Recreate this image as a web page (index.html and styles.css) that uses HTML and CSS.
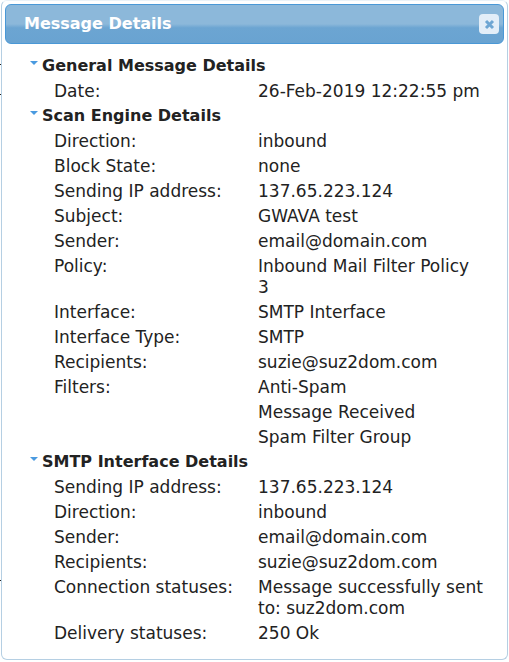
FILE: index.html
```html
<!DOCTYPE html>
<html lang="en">
<head>
<meta charset="utf-8">
<title>Message Details</title>
<link rel="stylesheet" href="styles.css">
</head>
<body>
<div class="dialog">
  <header class="titlebar">
    <span class="title">Message Details</span>
    <button class="close" aria-label="Close">
      <svg width="11" height="11" viewBox="0 0 11 11"><path d="M2 2l7 7M9 2l-7 7" stroke="#6ea6d3" stroke-width="3" fill="none"/></svg>
    </button>
  </header>
  <div class="content">
    <section>
      <h2 class="heading"><span class="arrow"></span>General Message Details</h2>
      <div class="rows">
        <div class="k">Date:</div><div class="v">26-Feb-2019 12:22:55 pm</div>
      </div>
    </section>
    <section>
      <h2 class="heading"><span class="arrow"></span>Scan Engine Details</h2>
      <div class="rows">
        <div class="k">Direction:</div><div class="v">inbound</div>
        <div class="k">Block State:</div><div class="v">none</div>
        <div class="k">Sending IP address:</div><div class="v">137.65.223.124</div>
        <div class="k">Subject:</div><div class="v">GWAVA test</div>
        <div class="k">Sender:</div><div class="v">email@domain.com</div>
        <div class="k">Policy:</div><div class="v">Inbound Mail Filter Policy 3</div>
        <div class="k">Interface:</div><div class="v">SMTP Interface</div>
        <div class="k">Interface Type:</div><div class="v">SMTP</div>
        <div class="k">Recipients:</div><div class="v">suzie@suz2dom.com</div>
        <div class="k">Filters:</div><div class="v">Anti-Spam</div>
        <div class="k"></div><div class="v">Message Received</div>
        <div class="k"></div><div class="v">Spam Filter Group</div>
      </div>
    </section>
    <section>
      <h2 class="heading"><span class="arrow"></span>SMTP Interface Details</h2>
      <div class="rows">
        <div class="k">Sending IP address:</div><div class="v">137.65.223.124</div>
        <div class="k">Direction:</div><div class="v">inbound</div>
        <div class="k">Sender:</div><div class="v">email@domain.com</div>
        <div class="k">Recipients:</div><div class="v">suzie@suz2dom.com</div>
        <div class="k">Connection statuses:</div><div class="v">Message successfully sent to: suz2dom.com</div>
        <div class="k">Delivery statuses:</div><div class="v">250 Ok</div>
      </div>
    </section>
  </div>
</div>
</body>
</html>
```
FILE: styles.css
```css
html, body {
  margin: 0;
  padding: 0;
  background: #fff;
}
body {
  width: 509px;
  height: 662px;
  overflow: hidden;
  font-family: "DejaVu Sans", sans-serif;
  font-size: 17px;
  color: #222;
  background-image:
    linear-gradient(#222, #222),
    linear-gradient(#222, #222),
    linear-gradient(#222, #222);
  background-repeat: no-repeat;
  background-size: 1px 1px;
  background-position: 0 64px, 0 94px, 0 580px;
}
.dialog {
  box-sizing: border-box;
  width: 507px;
  height: 660px;
  margin-left: 1px;
  padding: 3px 3px 3px;
  border: 1px solid #b5cfe3;
  border-top-color: #eaf2f8;
  border-radius: 6px;
}
.titlebar {
  box-sizing: border-box;
  height: 40px;
  display: flex;
  align-items: center;
  justify-content: space-between;
  padding: 0 4px 2px 18px;
  border: 1px solid #4a98d6;
  border-radius: 6px;
  background: linear-gradient(#8cb8da 0, #8cb8da 50%, #6ca5d2 60%, #69a3d1 100%);
}
.title {
  color: #fff;
  font-size: 16px;
  font-weight: 700;
}
.close {
  width: 20px;
  height: 20px;
  margin-top: 2px;
  padding: 0;
  border: 0;
  border-radius: 4px;
  background: #e3eef8;
  display: flex;
  align-items: center;
  justify-content: center;
}
.content {
  padding: 9px 0 0 25px;
}
.heading {
  margin: 0;
  height: 25px;
  line-height: 25px;
  font-size: 16px;
  font-weight: 700;
  color: #222;
  position: relative;
  padding-left: 12px;
}
.arrow {
  position: absolute;
  left: 0;
  top: 8px;
  width: 0;
  height: 0;
  border-left: 4px solid transparent;
  border-right: 4px solid transparent;
  border-top: 4px solid #4a9ae0;
}
.rows {
  display: grid;
  grid-template-columns: 204px 226px;
  padding-left: 24px;
}
.k, .v {
  box-sizing: border-box;
  min-height: 25px;
  line-height: 21px;
  padding: 3px 0 1px;
}
```
